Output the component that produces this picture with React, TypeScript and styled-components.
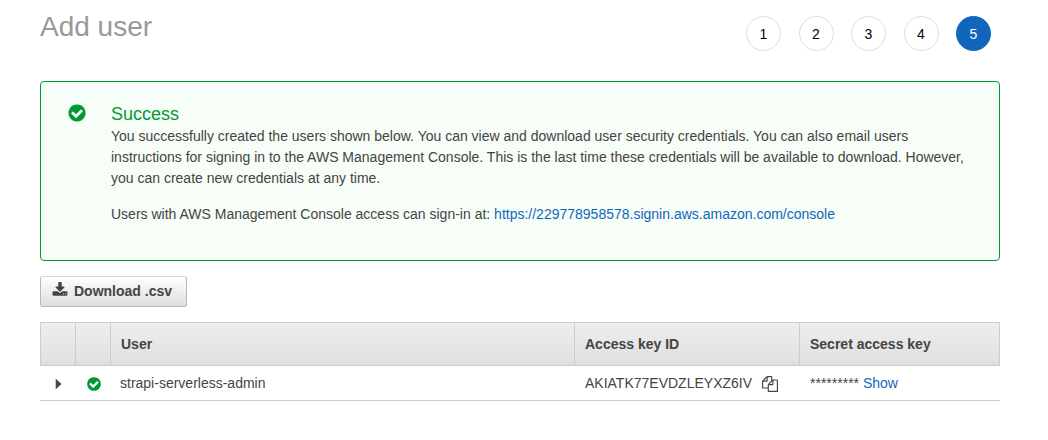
import React from "react";
import styled, { createGlobalStyle } from "styled-components";

const GlobalStyle = createGlobalStyle`
  *, *::before, *::after { box-sizing: border-box; }
  body {
    margin: 0;
    background: #fff;
    color: #444;
    font: 14px/21px "Liberation Sans", Arial, Helvetica, sans-serif;
  }
`;

const Page = styled.main`
  padding: 10px 48px 24px 40px;
`;

const Header = styled.header`
  display: flex;
  justify-content: space-between;
  align-items: flex-start;
  height: 71px;
`;

const Title = styled.h1`
  margin: 0;
  color: #999;
  font-size: 28px;
  line-height: 34px;
  font-weight: 400;
`;

const Steps = styled.ol`
  display: flex;
  justify-content: space-between;
  width: 245px;
  margin: 6px 9px 0 0;
  padding: 0;
  list-style: none;
`;

const Step = styled.li<{ $active: boolean }>`
  width: 35px;
  height: 35px;
  border: 1px solid ${(p) => (p.$active ? "#1166bb" : "#ddd")};
  border-radius: 50%;
  background: ${(p) => (p.$active ? "#1166bb" : "#fff")};
  color: ${(p) => (p.$active ? "#fff" : "#000")};
  line-height: 35px;
  text-align: center;
`;

const Icon = styled.svg<{ $size: number; $color?: string }>`
  display: block;
  flex: none;
  width: ${(p) => p.$size}px;
  height: ${(p) => p.$size}px;
  fill: ${(p) => p.$color ?? "currentColor"};
`;

const Alert = styled.section`
  display: flex;
  gap: 24px;
  padding: 21px 26px 20px;
  border: 1px solid #093;
  border-radius: 4px;
  background: #f7fef8;
`;

const AlertBody = styled.div`
  flex: 1;
`;

const AlertTitle = styled.h2`
  margin: 0 0 1px;
  color: #093;
  font-size: 18px;
  line-height: 22px;
  font-weight: 400;
`;

const Paragraph = styled.p`
  margin: 0 0 15px;
`;

const Link = styled.a`
  color: #1166bb;
  text-decoration: none;
`;

const DownloadButton = styled.button`
  display: flex;
  gap: 6px;
  height: 31px;
  margin: 15px 0;
  padding: 5px 14px 0 11px;
  border: 1px solid #b7b7b7;
  border-top-color: #d4d4d4;
  border-radius: 3px;
  background: linear-gradient(#fff, #ddd);
  color: #444;
  font: bold 14px/18px "Liberation Sans", Arial, Helvetica, sans-serif;
  cursor: pointer;
`;

const Table = styled.table`
  width: 100%;
  border-collapse: separate;
  border-spacing: 0;
  table-layout: fixed;
`;

const Column = styled.col<{ $width?: number }>`
  width: ${(p) => (p.$width ? `${p.$width}px` : "auto")};
`;

const HeadRow = styled.tr`
  height: 44px;
  background: linear-gradient(#eee, #dfdfdf);
`;

const HeadCell = styled.th`
  padding: 0 10px;
  border: 1px solid #ccc;
  border-right-width: 0;
  text-align: left;

  &:last-child {
    border-right-width: 1px;
  }
`;

const BodyRow = styled.tr`
  height: 35px;
`;

const Cell = styled.td<{ $left?: number }>`
  padding: 0 10px 0 ${(p) => p.$left ?? 10}px;
  border-bottom: 1px solid #ccc;
`;

const KeyGroup = styled.div`
  display: flex;
  align-items: center;
  gap: 10px;
`;

const Status = styled.div`
  padding-top: 2px;
`;

const IconButton = styled.button`
  display: block;
  padding: 2px 0 0;
  border: 0;
  background: none;
  color: #444;
  cursor: pointer;
`;

const CHECK =
  "M1412 734q0-28-18-46l-91-90q-19-19-45-19t-45 19l-408 407-226-226q-19-19-45-19t-45 19l-91 90q-18 18-18 46 0 27 18 45l362 362q19 19 45 19 27 0 46-19l543-543q18-18 18-45zm252 162q0 209-103 385.5t-279.5 279.5-385.5 103-385.5-103-279.5-279.5-103-385.5 103-385.5 279.5-279.5 385.5-103 385.5 103 279.5 279.5 103 385.5z";
const DOWNLOAD =
  "M1344 1344q0-26-19-45t-45-19-45 19-19 45 19 45 45 19 45-19 19-45zm256 0q0-26-19-45t-45-19-45 19-19 45 19 45 45 19 45-19 19-45zm128-224v320q0 40-28 68t-68 28h-1472q-40 0-68-28t-28-68v-320q0-40 28-68t68-28h465l135 136q58 56 136 56t136-56l136-136h464q40 0 68 28t28 68zm-325-569q17 41-14 70l-448 448q-18 19-45 19t-45-19l-448-448q-31-29-14-70 17-39 59-39h256v-448q0-26 19-45t45-19h256q26 0 45 19t19 45v448h256q42 0 59 39z";
const COPY =
  "M1696 384q40 0 68 28t28 68v1216q0 40-28 68t-68 28h-960q-40 0-68-28t-28-68v-288h-544q-40 0-68-28t-28-68v-672q0-40 20-88t48-76l408-408q28-28 76-48t88-20h416q40 0 68 28t28 68v328q68-40 128-40h416zm-544 213l-299 299h299v-299zm-640-384l-299 299h299v-299zm196 647l316-316v-416h-384v416q0 40-28 68t-68 28h-416v640h512v-256q0-40 20-88t48-76zm956 804v-1152h-384v416q0 40-28 68t-68 28h-416v640h896z";
const CARET = "M640 320v1152l640-576z";

type GlyphProps = { path: string; size: number; color?: string };

const Glyph = ({ path, size, color }: GlyphProps) => (
  <Icon viewBox="0 0 1792 1792" $size={size} $color={color} aria-hidden="true">
    <path d={path} />
  </Icon>
);

export default function App() {
  return (
    <>
      <GlobalStyle />
      <Page>
        <Header>
          <Title>Add user</Title>
          <Steps>
            {[1, 2, 3, 4, 5].map((n) => (
              <Step key={n} $active={n === 5} aria-current={n === 5 ? "step" : undefined}>
                {n}
              </Step>
            ))}
          </Steps>
        </Header>

        <Alert>
          <Glyph path={CHECK} size={20} color="#093" />
          <AlertBody>
            <AlertTitle>Success</AlertTitle>
            <Paragraph>
              You successfully created the users shown below. You can view and download user security
              credentials. You can also email users instructions for signing in to the AWS Management
              Console. This is the last time these credentials will be available to download. However,
              you can create new credentials at any time.
            </Paragraph>
            <Paragraph>
              Users with AWS Management Console access can sign-in at:{" "}
              <Link href="https://229778958578.signin.aws.amazon.com/console">
                https://229778958578.signin.aws.amazon.com/console
              </Link>
            </Paragraph>
          </AlertBody>
        </Alert>

        <DownloadButton type="button">
          <Glyph path={DOWNLOAD} size={16} />
          Download .csv
        </DownloadButton>

        <Table>
          <colgroup>
            <Column $width={35} />
            <Column $width={35} />
            <Column />
            <Column $width={225} />
            <Column $width={201} />
          </colgroup>
          <thead>
            <HeadRow>
              <HeadCell />
              <HeadCell />
              <HeadCell scope="col">User</HeadCell>
              <HeadCell scope="col">Access key ID</HeadCell>
              <HeadCell scope="col">Secret access key</HeadCell>
            </HeadRow>
          </thead>
          <tbody>
            <BodyRow>
              <Cell>
                <IconButton type="button" aria-label="Expand strapi-serverless-admin">
                  <Glyph path={CARET} size={16} />
                </IconButton>
              </Cell>
              <Cell $left={11}>
                <Status>
                  <Glyph path={CHECK} size={16} color="#093" />
                </Status>
              </Cell>
              <Cell>strapi-serverless-admin</Cell>
              <Cell $left={11}>
                <KeyGroup>
                  AKIATK77EVDZLEYXZ6IV
                  <IconButton type="button" aria-label="Copy access key ID">
                    <Glyph path={COPY} size={16} />
                  </IconButton>
                </KeyGroup>
              </Cell>
              <Cell $left={11}>
                ********* <Link href="#show">Show</Link>
              </Cell>
            </BodyRow>
          </tbody>
        </Table>
      </Page>
    </>
  );
}
